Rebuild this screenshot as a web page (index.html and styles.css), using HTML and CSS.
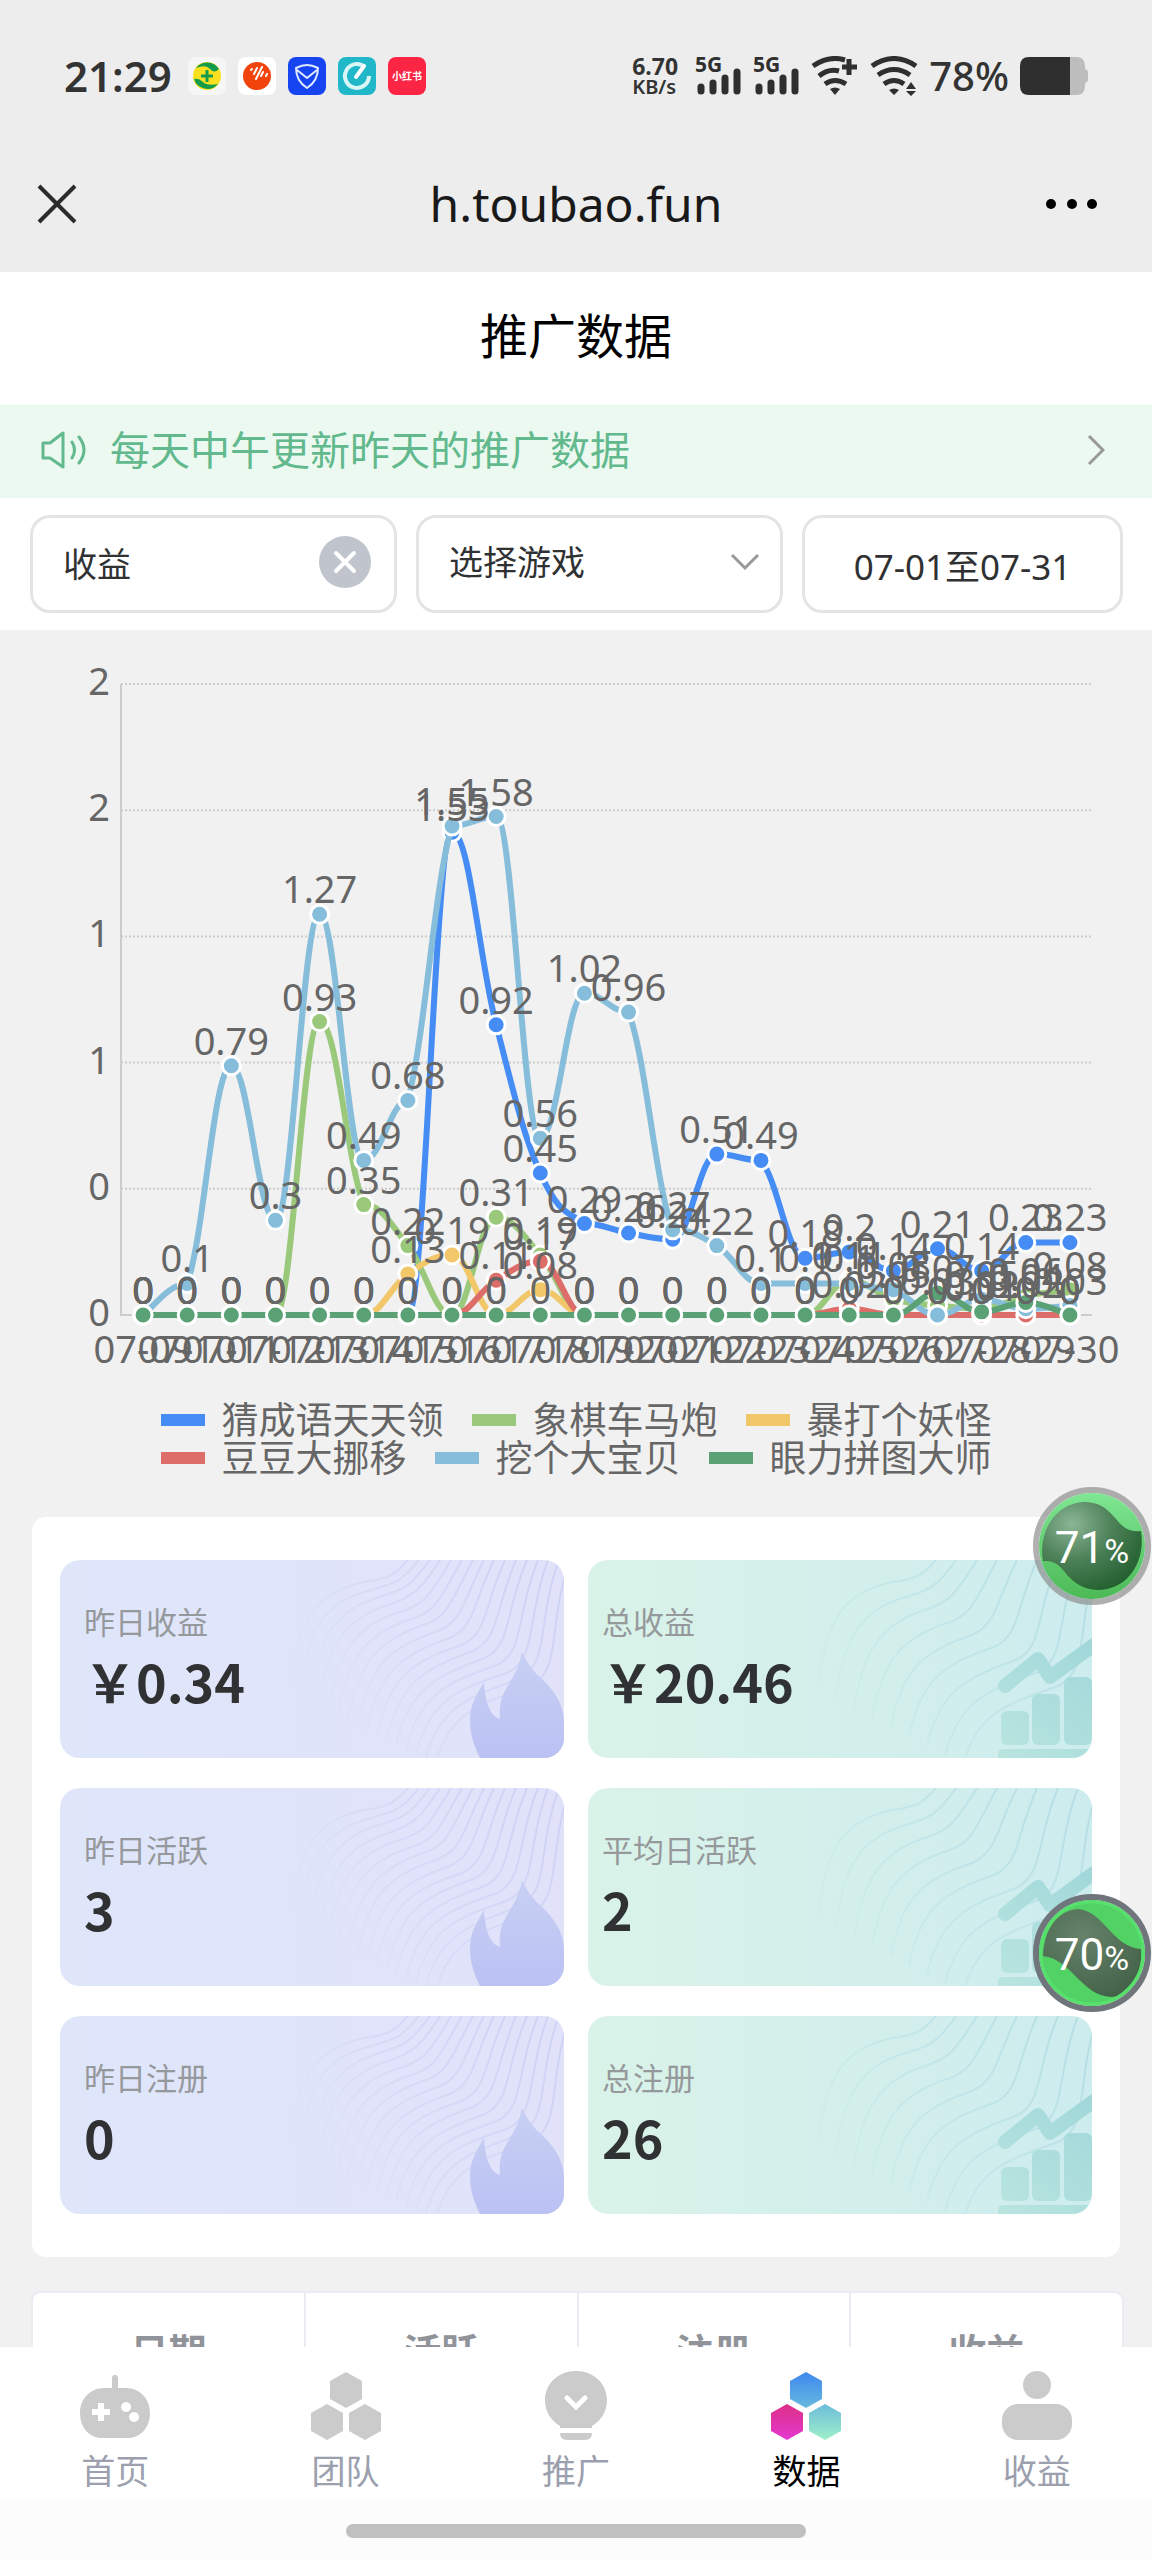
FILE: index.html
```html
<!DOCTYPE html>
<html lang="zh-CN">
<head>
  <meta charset="UTF-8">
  <meta name="viewport" content="width=device-width, initial-scale=1">
  <title>推广数据</title>
  <link rel="stylesheet" href="styles.css">
</head>
<body>

<!-- shared card art -->
<svg class="defs" width="0" height="0">
  <defs>
    <linearGradient id="fadeBlue" gradientUnits="userSpaceOnUse" x1="260" y1="170" x2="480" y2="20">
      <stop offset="0" stop-color="#ced2f4" stop-opacity="0"/>
      <stop offset="1" stop-color="#ced2f4"/>
    </linearGradient>
    <linearGradient id="fadeGreen" gradientUnits="userSpaceOnUse" x1="260" y1="170" x2="480" y2="20">
      <stop offset="0" stop-color="#b6dfe5" stop-opacity="0.1"/>
      <stop offset="1" stop-color="#b6dfe5"/>
    </linearGradient>
    <linearGradient id="flame" x1="0" y1="0" x2="0" y2="1">
      <stop offset="0" stop-color="#c7d0f3"/>
      <stop offset="1" stop-color="#bbc1f3"/>
    </linearGradient>
    <linearGradient id="growth" gradientUnits="userSpaceOnUse" x1="410" y1="198" x2="504" y2="90">
      <stop offset="0" stop-color="#b9e5df"/>
      <stop offset="1" stop-color="#a2d8da"/>
    </linearGradient>
    <linearGradient id="hexBlue" x1="0" y1="0" x2="0" y2="1"><stop offset="0" stop-color="#3f87f0"/><stop offset="1" stop-color="#66b9de"/></linearGradient>
    <linearGradient id="hexPink" x1="0" y1="0" x2="0" y2="1"><stop offset="0" stop-color="#dc2f86"/><stop offset="1" stop-color="#e538d2"/></linearGradient>
    <linearGradient id="hexMint" x1="0" y1="0" x2="0" y2="1"><stop offset="0" stop-color="#6cbcdc"/><stop offset="1" stop-color="#9ff0c8"/></linearGradient>
    <radialGradient id="ballDark" cx="0.3" cy="0.25" r="0.9"><stop offset="0" stop-color="#8bb595"/><stop offset="0.45" stop-color="#4d8158"/><stop offset="1" stop-color="#1c5a28"/></radialGradient>
    <radialGradient id="ballGrey" cx="0.4" cy="0.3" r="0.9"><stop offset="0" stop-color="#66836a"/><stop offset="1" stop-color="#3c5c42"/></radialGradient>
    <linearGradient id="ballGreen" x1="0" y1="0" x2="0" y2="1"><stop offset="0" stop-color="#7fe693"/><stop offset="1" stop-color="#4cb956"/></linearGradient>
    <symbol id="art-flame" viewBox="0 0 504 198">
      <g id="waves-blue" fill="none" stroke="url(#fadeBlue)" stroke-width="2"></g>
      <path fill="url(#flame)" d="M462 92C468 105 474 112 482 119C494 130 504 145 504 162V198H420C414 186 410 174 410 160C410 145 416 136 424 122C425 142 430 156 440 159C438 140 445 131 450 122C456 112 460 104 462 92Z"/>
    </symbol>
    <symbol id="art-growth" viewBox="0 0 504 198">
      <g id="waves-green" fill="none" stroke="url(#fadeGreen)" stroke-width="2"></g>
      <g fill="url(#growth)">
        <rect x="413" y="151" width="28" height="34" rx="6"/>
        <rect x="444" y="134" width="28" height="51" rx="6"/>
        <rect x="476" y="117" width="28" height="68" rx="6"/>
        <path d="M415 189H504V198H410V194Q410 189 415 189Z"/>
      </g>
      <path fill="none" stroke="url(#growth)" stroke-width="14" stroke-linecap="round" stroke-linejoin="round" d="M417 126L450 99L462 117L506 85"/>
    </symbol>
  </defs>
</svg>

<div class="app">
  <header class="system">
    <div class="status">
      <span class="clock">21:29</span>
      <div class="apps">
        <svg viewBox="0 0 38 38"><rect width="38" height="38" rx="8" fill="#f6f6f6"/><circle cx="19" cy="19" r="14" fill="#fbe01f"/><path d="M8 11A14 14 0 0 1 31 12Q26 17 22 12T8 11ZM30 27A14 14 0 0 1 6 22Q11 21 15 25T30 27Z" fill="#149c4b"/><path d="M19 13V25M13 19H25" stroke="#149c4b" stroke-width="3"/></svg>
        <svg viewBox="0 0 38 38"><rect width="38" height="38" rx="8" fill="#fff"/><circle cx="19" cy="19" r="14" fill="#f0440c"/><path d="M13 13l1-1M16 17l3-6M18 22l6-12M23 19l2-4M28 19l1-2" stroke="#fff" stroke-width="2" stroke-linecap="round"/></svg>
        <svg viewBox="0 0 38 38"><rect width="38" height="38" rx="8" fill="#1644f0"/><path d="M19 8Q24 8 30 11Q30 24 19 31Q8 24 8 11Q14 8 19 8ZM9 13L19 21L29 13" fill="none" stroke="#dfe9ff" stroke-width="2" stroke-linejoin="round"/></svg>
        <svg viewBox="0 0 38 38"><rect width="38" height="38" rx="8" fill="#20b8c8"/><path d="M27 10A12 12 0 1 0 31 19" fill="none" stroke="#d8f6f6" stroke-width="4"/><path d="M26 9L18 20" stroke="#fff" stroke-width="4" stroke-linecap="round"/></svg>
        <svg viewBox="0 0 38 38"><rect width="38" height="38" rx="8" fill="#fd2544"/><text x="19" y="23" class="app-text">小红书</text></svg>
      </div>
      <div class="speed"><b>6.70</b><b class="unit">KB/s</b></div>
      <svg class="signal" viewBox="0 0 48 40"><text x="0" y="16">5G</text><path d="M6 31V35M18 27V35M30 22V35M42 16V35"/></svg>
      <svg class="signal" viewBox="0 0 48 40"><text x="0" y="16">5G</text><path d="M6 31V35M18 27V35M30 22V35M42 16V35"/></svg>
      <svg class="wifi" viewBox="0 0 48 40"><path d="M2 10Q18 -1 34 4M8 20Q18 12 28 15M14 28Q24 21 35 28"/><path d="M31 11H46M38 3V19"/><path class="solid" d="M19 33Q24 30 29 33L24 39Z"/></svg>
      <svg class="wifi" viewBox="0 0 48 40"><path d="M2 10Q24 -5 46 10M8 19Q24 8 40 19M14 28Q24 21 34 28"/><path class="solid" d="M19 34Q24 31 29 34L24 39ZM36 33L41 26L46 33ZM36 35H46L41 40Z"/></svg>
      <span class="percent">78%</span>
      <svg class="battery" viewBox="0 0 68 38"><path fill="#bdbdbd" d="M50 0H56Q65 0 65 9V12Q68 13 68 15V23Q68 25 65 26V29Q65 38 56 38H50Z"/><path fill="#2f2f2f" d="M9 0H50V38H9Q0 38 0 29V9Q0 0 9 0Z"/></svg>
    </div>
    <div class="browser">
      <button class="plain" aria-label="关闭"><svg width="40" height="40" viewBox="0 0 40 40"><path d="M2 2L38 38M38 2L2 38" stroke="#2b2b2b" stroke-width="4"/></svg></button>
      <span class="host">h.toubao.fun</span>
      <button class="plain" aria-label="更多"><svg width="54" height="12" viewBox="0 0 54 12"><circle cx="6" cy="6" r="5"/><circle cx="27" cy="6" r="5"/><circle cx="47" cy="6" r="5"/></svg></button>
    </div>
  </header>

  <main class="content">
    <h1 class="title">推广数据</h1>

    <a class="notice" href="#">
      <svg width="46" height="38" viewBox="0 0 46 38" fill="none" stroke="#62b98d" stroke-width="3" stroke-linejoin="round"><path d="M2 12H9L22 2V36L9 27H2Z"/><path d="M31 11Q36 19 31 27M38 6Q48 19 38 32" stroke-linecap="round"/></svg>
      <span>每天中午更新昨天的推广数据</span>
      <svg class="arrow" width="18" height="32" viewBox="0 0 18 32" fill="none" stroke="#999" stroke-width="3"><path d="M2 2L16 16L2 30"/></svg>
    </a>

    <form class="filters">
      <div class="field">
        <input type="text" value="收益" aria-label="数据类型" readonly>
        <button type="button" class="plain" aria-label="清除"><svg width="52" height="52" viewBox="0 0 52 52"><circle cx="26" cy="26" r="26" fill="#c0c4cc"/><path d="M17 17L35 35M35 17L17 35" stroke="#fff" stroke-width="4" stroke-linecap="round"/></svg></button>
      </div>
      <div class="field">
        <select aria-label="游戏"><option>选择游戏</option></select>
        <svg width="30" height="18" viewBox="0 0 30 18" fill="none" stroke="#999" stroke-width="3"><path d="M2 2L15 15L28 2"/></svg>
      </div>
      <button type="button" class="field range">07-01至07-31</button>
    </form>

    <svg id="chart" class="chart" viewBox="0 0 1152 771"></svg>

    <div class="legend">
      <div><span class="c0">猜成语天天领</span><span class="c1">象棋车马炮</span><span class="c2">暴打个妖怪</span></div>
      <div><span class="c3">豆豆大挪移</span><span class="c4">挖个大宝贝</span><span class="c5">眼力拼图大师</span></div>
    </div>

    <section class="panel">
      <div class="card"><svg><use href="#art-flame"/></svg><p>昨日收益</p><strong>￥0.34</strong></div>
      <div class="card green"><svg><use href="#art-growth"/></svg><p>总收益</p><strong>￥20.46</strong></div>
      <div class="card"><svg><use href="#art-flame"/></svg><p>昨日活跃</p><strong>3</strong></div>
      <div class="card green"><svg><use href="#art-growth"/></svg><p>平均日活跃</p><strong>2</strong></div>
      <div class="card"><svg><use href="#art-flame"/></svg><p>昨日注册</p><strong>0</strong></div>
      <div class="card green"><svg><use href="#art-growth"/></svg><p>总注册</p><strong>26</strong></div>
    </section>

    <div class="table-wrap">
      <table>
        <thead><tr><th>日期</th><th>活跃</th><th>注册</th><th>收益</th></tr></thead>
      </table>
    </div>
  </main>

  <nav class="tabs">
    <a href="#"><svg viewBox="0 0 70 70"><path fill-rule="evenodd" d="M32 17V7Q32 4 35 4T38 7V17H46C60 17 70 28 70 42C70 57 60 67 48 67H22C10 67 0 57 0 42C0 28 10 17 24 17ZM18 32V38H12V44H18V50H24V44H30V38H24V32ZM46 31a5 5 0 1 0 .1 0ZM54 41a5 5 0 1 0 .1 0Z"/></svg>首页</a>
    <a href="#"><svg viewBox="0 0 70 70"><path d="M35 1L51 10V28L35 37L19 28V10ZM16 33L32 42V60L16 69L0 60V42ZM54 33L70 42V60L54 69L38 60V42Z"/></svg>团队</a>
    <a href="#"><svg viewBox="0 0 70 70"><path d="M35 0C53 0 66 13 66 29C66 42 59 50 51 55V57H19V55C11 50 4 42 4 29C4 13 17 0 35 0ZM19 62H51Q51 69 44 69H26Q19 69 19 62Z"/><path d="M26 27L35 36L44 27" fill="none" stroke="#fff" stroke-width="5" stroke-linecap="round"/></svg>推广</a>
    <a href="#" class="active"><svg viewBox="0 0 70 70"><path fill="url(#hexBlue)" d="M35 1L51 10V28L35 37L19 28V10Z"/><path fill="url(#hexPink)" d="M16 33L32 42V60L16 69L0 60V42Z"/><path fill="url(#hexMint)" d="M54 33L70 42V60L54 69L38 60V42Z"/></svg>数据</a>
    <a href="#"><svg viewBox="0 0 70 70"><circle cx="35" cy="14" r="14"/><rect y="33" width="70" height="36" rx="16"/></svg>收益</a>
  </nav>
  <div class="home"><span></span></div>

  <button class="ball first"><svg viewBox="0 0 120 120"><circle cx="60" cy="60" r="56" fill="none" stroke="#8f8f8f" stroke-opacity="0.7" stroke-width="6"/><circle cx="60" cy="60" r="53" fill="url(#ballGreen)"/><path fill="url(#ballDark)" d="M11 75C6 45 24 16 54 16C70 17 76 24 84 33C92 43 98 46 109 45C114 78 94 104 66 104C50 103 43 97 36 90C29 81 24 74 11 75Z"/></svg><span>71<small>%</small></span></button>
  <button class="ball second"><svg viewBox="0 0 120 120"><circle cx="60" cy="60" r="56" fill="none" stroke="#6f757b" stroke-width="6"/><circle cx="60" cy="60" r="53" fill="#52d165"/><path fill="url(#ballGrey)" d="M11 63C12 36 26 17 46 16C72 18 80 54 109 56C111 80 100 102 80 104C50 104 40 66 11 63Z"/><circle cx="60" cy="60" r="51" fill="none" stroke="#58e06c" stroke-width="3"/></svg><span>70<small>%</small></span></button>
</div>

<script src="chart.js"></script>
</body>
</html>
```
FILE: styles.css
```css
* { box-sizing: border-box; }
body { margin: 0; background: #f1f1f1; color: #303133; font-family: "Noto Sans", "Noto Sans CJK SC", sans-serif; }
h1, p { margin: 0; font-weight: normal; }
button, input, select { font: inherit; color: inherit; }
svg { display: block; flex: none; }
.defs { position: absolute; }
.plain { border: 0; padding: 0; background: none; }

.app {
  position: relative;
  display: flex;
  flex-direction: column;
  height: 100vh;
  overflow: hidden;
}

/* system bar */
.system { flex: none; height: 272px; background: #ededed; }
.status { display: flex; align-items: center; height: 152px; padding: 0 64px; color: #333; }
.clock { font-size: 42px; line-height: 56px; font-weight: 600; }
.apps { display: flex; gap: 12px; margin: 0 auto 0 16px; }
.apps svg { width: 38px; height: 38px; }
.app-text { font-size: 10px; font-weight: 700; fill: #fff; text-anchor: middle; }
.speed { display: flex; flex-direction: column; margin-right: 17px; font-size: 23px; line-height: 22px; }
.speed .unit { font-size: 20px; line-height: 20px; font-weight: 600; }
.signal { width: 48px; height: 40px; margin-right: 10px; overflow: visible; }
.signal text { font-size: 21px; font-weight: 700; fill: #2f2f2f; }
.signal path { stroke: #2f2f2f; stroke-width: 7; stroke-linecap: round; }
.wifi { width: 48px; height: 40px; margin-right: 11px; }
.wifi path { fill: none; stroke: #2f2f2f; stroke-width: 5; }
.wifi .solid { fill: #2f2f2f; stroke: none; }
.percent { margin-right: 11px; font-size: 40px; line-height: 56px; font-weight: 500; }
.battery { width: 68px; height: 38px; }

.browser { display: grid; grid-template-columns: 1fr auto 1fr; align-items: center; height: 104px; padding: 0 53px 0 37px; color: #191919; }
.browser .plain:last-child { justify-self: end; }
.browser .plain:first-child { justify-self: start; }
.host { padding-left: 16px; font-size: 48px; line-height: 60px; }

.content { flex: 1; min-height: 0; overflow: hidden; }
.title { height: 133px; background: #fff; color: #000; font-size: 48px; line-height: 128px; text-align: center; }
.notice {
  display: flex;
  align-items: center;
  gap: 23px;
  height: 93px;
  padding: 0 47px 4px 41px;
  background: #ecf9f0;
  color: #62b98d;
  font-size: 40px;
  line-height: 60px;
  text-decoration: none;
}
.arrow { margin-left: auto; }

.filters { display: grid; grid-template-columns: 367fr 367fr 321fr; gap: 19px; height: 132px; padding: 17px 29px 17px 30px; background: #fff; }
.field {
  display: flex;
  align-items: center;
  min-width: 0;
  padding: 0 20px 4px 30px;
  border: 3px solid #e4e4e6;
  border-radius: 20px;
  background: #fff;
  font-size: 34px;
}
.field input, .field select { flex: 1; min-width: 0; padding: 0; border: 0; outline: 0; background: none; appearance: none; }
.field .plain { margin-right: 3px; }
.range { justify-content: center; padding: 0; font-size: 35px; }

/* chart */
.chart { width: 100%; height: auto; }
.chart text { font-size: 38px; fill: #666; text-anchor: middle; }
.chart .y-label { text-anchor: end; }
.chart .grid { stroke: #ccc; stroke-width: 2; stroke-dasharray: 2 2; }
.chart .axis { fill: none; stroke: #ccc; stroke-width: 2; }
.chart .line { fill: none; stroke-width: 6; }
.chart circle { stroke: #fff; stroke-width: 3; }

.legend { margin-bottom: 40px; color: #666; font-size: 37px; line-height: 38px; }
.legend div { display: flex; justify-content: center; gap: 28px; }
.legend span { display: flex; align-items: center; gap: 17px; }
.legend span::before { content: ""; width: 44px; height: 12px; background: currentColor; }
.legend .c0::before { background: #458df5; }
.legend .c1::before { background: #9bc97c; }
.legend .c2::before { background: #f1c76a; }
.legend .c3::before { background: #dc6d69; }
.legend .c4::before { background: #86bdda; }
.legend .c5::before { background: #5aa176; }

/* summary cards */
.panel { display: grid; grid-template-columns: 1fr 1fr; gap: 30px 24px; margin: 0 32px; padding: 43px 28px; border-radius: 14px; background: #fff; }
.card { position: relative; height: 198px; padding: 38px 24px 0; border-radius: 20px; overflow: hidden; background: linear-gradient(90deg, #dfe6fa, #e1e2fa); }
.card.green { padding-left: 14px; background: linear-gradient(90deg, #daf3e9, #cdecee); }
.card svg { position: absolute; right: 0; top: 0; width: 504px; height: 198px; }
.card p { position: relative; color: #96999c; font-size: 31px; line-height: 48px; }
.card strong { position: relative; display: block; font: 700 52px/70px "Noto Sans CJK SC", sans-serif; }

.table-wrap { margin: 34px 28px 0 31px; border: 2px solid #ebebf3; border-radius: 10px; background: #fff; overflow: hidden; }
table { width: 100%; border-collapse: collapse; table-layout: fixed; }
th { height: 116px; padding: 0; border-right: 2px solid #ebebf3; color: #909399; font-size: 38px; line-height: 60px; }
th:last-child { border-right: 0; }

/* bottom tabs */
.tabs { display: flex; flex: none; height: 154px; background: #fff; }
.tabs a { display: flex; flex: 1; flex-direction: column; align-items: center; gap: 6px; padding-top: 24px; color: #9b9fae; font-size: 34px; line-height: 48px; text-decoration: none; }
.tabs svg { width: 70px; height: 70px; fill: #cbcbcb; }
.tabs .active { color: #000; }
.home { display: flex; flex: none; justify-content: center; height: 59px; padding-top: 23px; background: #fcfcfc; }
.home span { width: 40%; height: 14px; border-radius: 7px; background: #c0c0c0; }

/* floating memory balls */
.ball { position: absolute; right: 0; width: 120px; height: 120px; padding: 0; border: 0; background: none; color: #fff; font: 44px/124px Roboto, sans-serif; }
.ball svg { position: absolute; inset: 0; }
.ball span { position: relative; }
.ball small { font-size: 34px; }
.first { top: 1486px; }
.second { top: 1893px; }
```
FILE: chart.js
```js
var left = 121, right = 1092, base = 685, top2 = 54;
var step = (right - left) / 22;
var series = [
  { color: '#458df5', data: [0,0,0,0,0,0,0,1.53,0.92,0.45,0.29,0.26,0.24,0.51,0.49,0.18,0.2,0.14,0.21,0.14,0.23,0.23] },
  { color: '#9bc97c', data: [0,0,0,0,0.93,0.35,0.22,0,0.31,0.19,0,0,0,0,0,0,0.11,0.05,0.03,0.02,0.06,0.08] },
  { color: '#f1c76a', data: [0,0,0,0,0,0,0.13,0.19,0,0.08,0,0,0,0,0,0,0,0,0,0,0,0] },
  { color: '#dc6d69', data: [0,0,0,0,0,0,0,0,0.11,0.17,0,0,0,0,0,0,0.02,0,0,0,0,0] },
  { color: '#86bdda', data: [0,0.1,0.79,0.3,1.27,0.49,0.68,1.55,1.58,0.56,1.02,0.96,0.27,0.22,0.1,0.1,0.1,0.08,0,0.05,0.02,0.03] },
  { color: '#5aa176', data: [0,0,0,0,0,0,0,0,0,0,0,0,0,0,0,0,0,0,0.07,0.01,0.04,0] }
];

function xAt(i) { return left + step * (i + 0.5); }
function yAt(v) { return base - v / 2 * (base - top2); }

function isPeak(p, i) {
  if (!p[i - 1] || !p[i + 1]) return false;
  return p[i].y >= Math.max(p[i - 1].y, p[i + 1].y) || p[i].y <= Math.min(p[i - 1].y, p[i + 1].y);
}

function curve(p) {
  var d = 'M' + p[0].x + ' ' + p[0].y;
  for (var i = 0; i < p.length - 1; i++) {
    var prev = p[i - 1] || p[i], next = p[i + 2] || p[i + 1];
    var ax = p[i].x + (p[i + 1].x - prev.x) * 0.2, ay = p[i].y + (p[i + 1].y - prev.y) * 0.2;
    var bx = p[i + 1].x - (next.x - p[i].x) * 0.2, by = p[i + 1].y - (next.y - p[i].y) * 0.2;
    var hi = Math.max(p[i].y, p[i + 1].y), lo = Math.min(p[i].y, p[i + 1].y);
    if (isPeak(p, i) || ay >= hi || ay <= lo) ay = p[i].y;
    if (isPeak(p, i + 1) || by >= hi || by <= lo) by = p[i + 1].y;
    d += 'C' + [ax, ay, bx, by, p[i + 1].x, p[i + 1].y].join(' ');
  }
  return d;
}

var out = '';
['0', '0', '1', '1', '2', '2'].forEach(function (label, i) {
  var y = base - i * (base - top2) / 5;
  if (i) out += '<line class="grid" x1="' + left + '" x2="' + right + '" y1="' + y + '" y2="' + y + '"/>';
  out += '<text class="y-label" x="110" y="' + (y + 11) + '">' + label + '</text>';
});
out += '<path class="axis" d="M' + left + ' ' + top2 + 'V' + base + 'H' + right + '"/>';

series.forEach(function (s) {
  var p = s.data.map(function (v, i) { return { x: xAt(i), y: yAt(v) }; });
  out += '<path class="line" stroke="' + s.color + '" d="' + curve(p) + '"/>';
  p.forEach(function (q) {
    out += '<circle fill="' + s.color + '" cx="' + q.x + '" cy="' + q.y + '" r="9"/>';
  });
});
series.forEach(function (s) {
  s.data.forEach(function (v, i) {
    out += '<text x="' + xAt(i) + '" y="' + (yAt(v) - 11) + '">' + v + '</text>';
  });
});
for (var day = 9; day <= 30; day++) {
  out += '<text x="' + xAt(day - 9) + '" y="733">07-' + (day < 10 ? '0' + day : day) + '</text>';
}
document.getElementById('chart').innerHTML = out;

// contour lines behind the cards, blended from the outer curve to the inner one
var outer = [348,0, 328,24, 316,18, 296,24, 250,36, 236,70, 230,130];
var inner = [510,0, 488,60, 502,110, 472,125, 420,145, 390,150, 375,205];
function waves(id, count) {
  var html = '';
  for (var k = 0; k < count; k++) {
    var t = k / (count - 1);
    var c = outer.map(function (v, i) { return Math.round(v + (inner[i] - v) * t); });
    html += '<path d="M' + c.slice(0, 2).join(' ') + 'C' + c.slice(2).join(' ') + '"/>';
  }
  document.getElementById(id).innerHTML = html;
}
waves('waves-blue', 16);
waves('waves-green', 9);
```
